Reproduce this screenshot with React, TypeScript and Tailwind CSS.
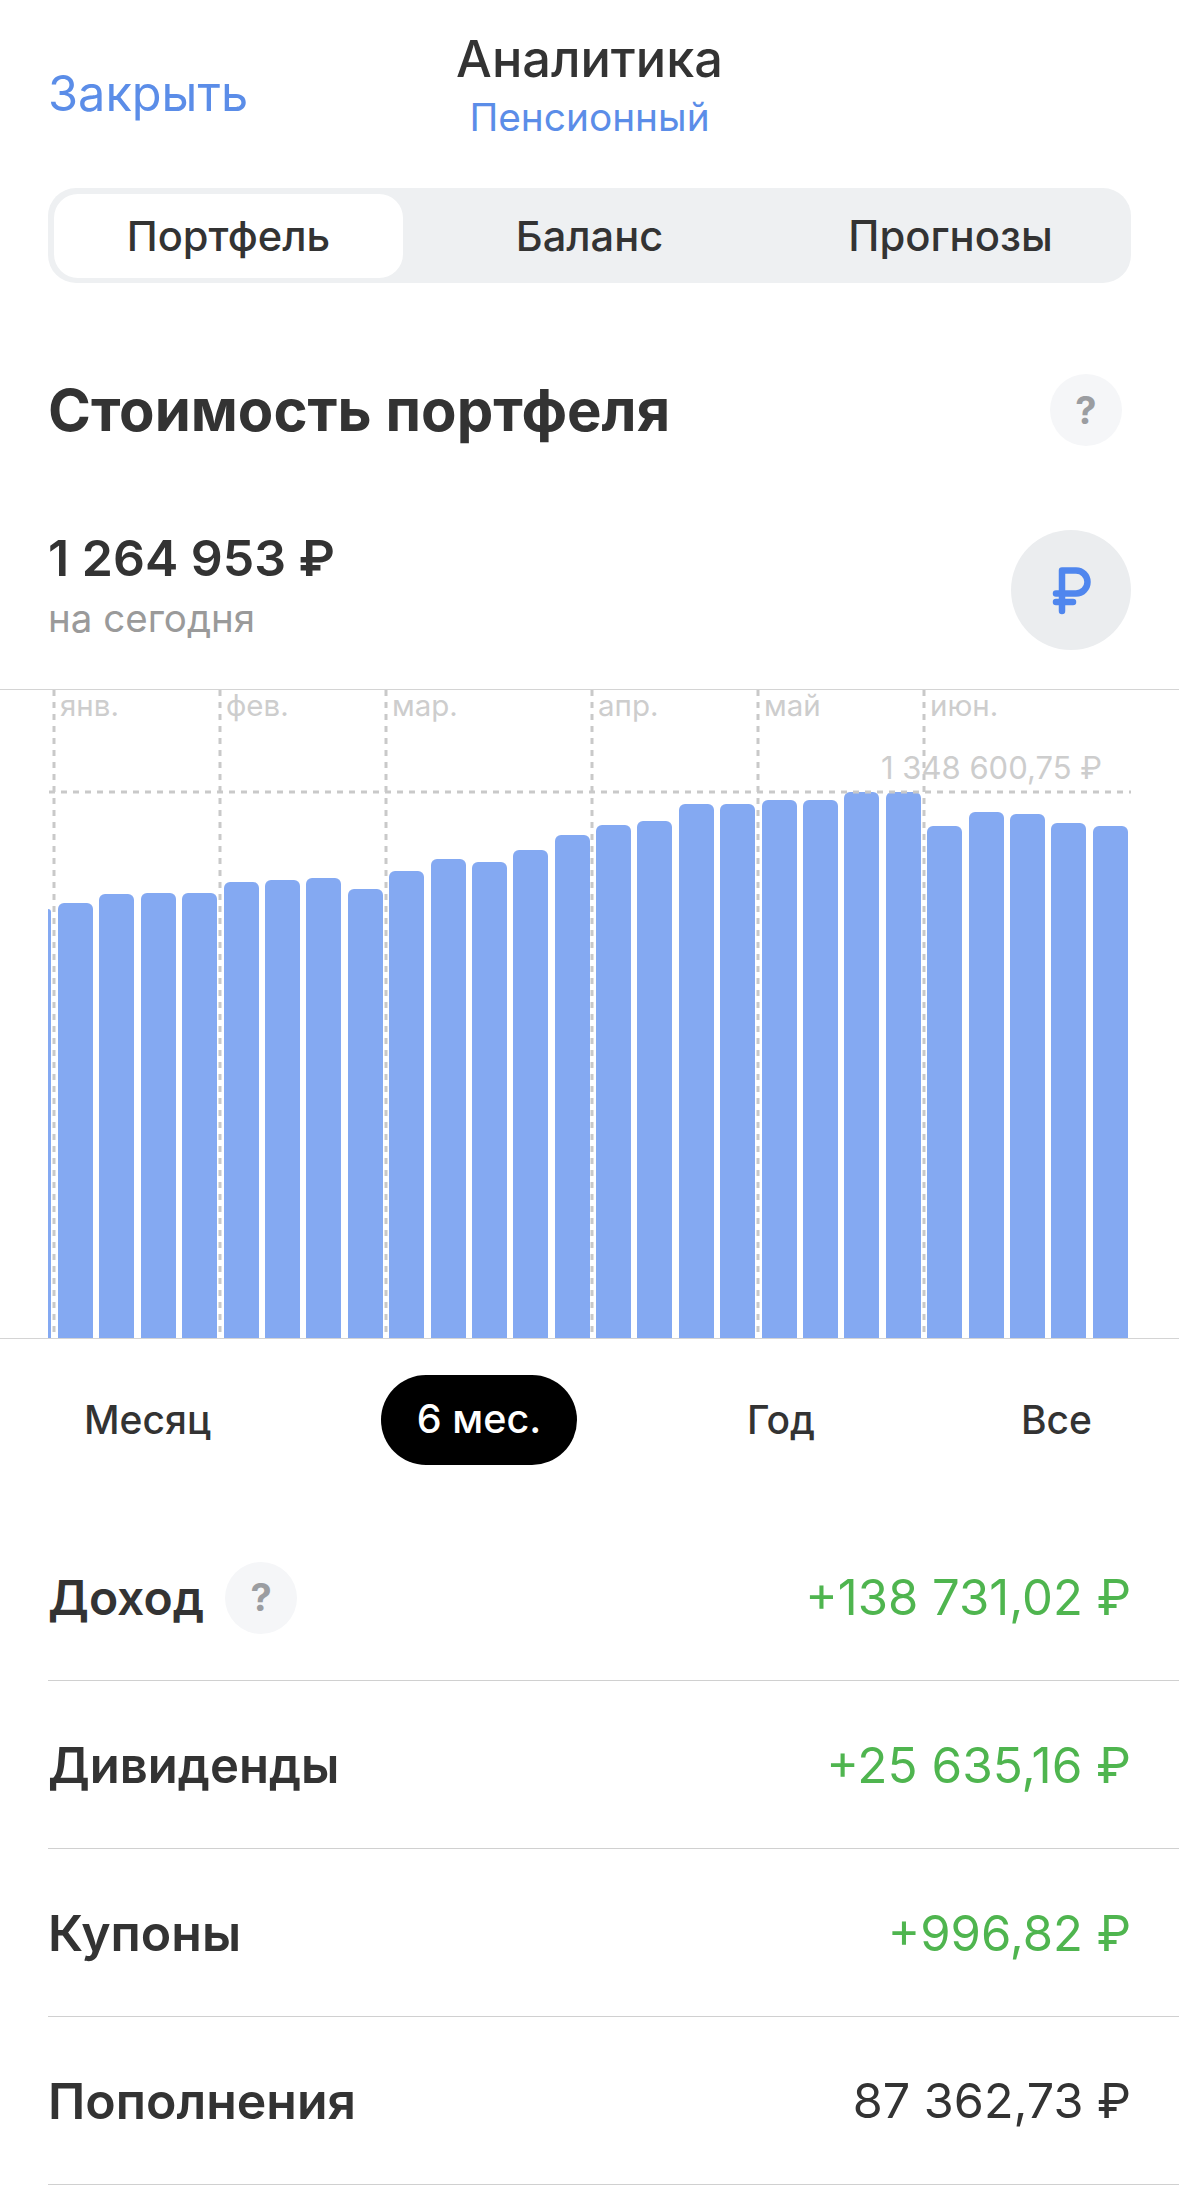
const barTops = [
  903, 894, 893, 893, 882, 880, 878, 889, 871, 859, 862, 850, 835, 825, 821, 804,
  804, 800, 800, 792, 792, 826, 812, 814, 823, 826,
];

const months = [
  { label: "янв.", x: 54 },
  { label: "фев.", x: 220 },
  { label: "мар.", x: 386 },
  { label: "апр.", x: 592 },
  { label: "май", x: 758 },
  { label: "июн.", x: 924 },
];

const rows = [
  { label: "Дивиденды", size: "text-[49px]", value: "+25 635,16 ₽", valueClass: "text-[49.5px] text-[#4fb54f]" },
  { label: "Купоны", size: "text-[50px]", value: "+996,82 ₽", valueClass: "text-[49px] text-[#4fb54f]" },
  { label: "Пополнения", size: "text-[50px]", value: "87 362,73 ₽", valueClass: "text-[48.5px] text-[#333333]" },
];

const CHART_BOTTOM = 1338;

function HelpDot() {
  return (
    <div className="flex h-[72px] w-[72px] shrink-0 items-center justify-center rounded-full bg-[#f5f6f8] text-[38px] font-bold text-[#9b9da1]">
      ?
    </div>
  );
}

function Chart() {
  return (
    <div className="relative mt-[39px] h-[650px] border-y border-[#d4d4d4]">
      <div className="flex h-full items-end pl-[48px]">
        <div className="mr-[7px] h-[429px] w-[3px] rounded-tr-[3px] bg-[#84a9f2]" />
        <div className="flex items-end gap-[6.4px]">
          {barTops.map((top, i) => (
            <div
              key={i}
              className="w-[35px] rounded-t-[6px] bg-[#84a9f2]"
              style={{ height: CHART_BOTTOM - top }}
            />
          ))}
        </div>
      </div>

      <svg
        className="absolute left-0 top-0 h-[648px] w-[1179px]"
        viewBox="0 0 1179 648"
        fill="none"
      >
        {months.map((m) => (
          <line
            key={m.x}
            x1={m.x}
            x2={m.x}
            y1="0"
            y2="648"
            stroke="#c9c9c9"
            strokeWidth="3"
            strokeDasharray="6 6"
          />
        ))}
        <line
          x1="49"
          x2="1131"
          y1="102"
          y2="102"
          stroke="#c9c9c9"
          strokeWidth="3"
          strokeDasharray="6 6"
        />
      </svg>

      {months.map((m) => (
        <span
          key={m.label}
          className="absolute top-[-3px] text-[29.5px] leading-[36px] text-[#cdcdcd]"
          style={{ left: m.x + 6 }}
        >
          {m.label}
        </span>
      ))}
      <span className="absolute left-[881px] top-[60px] text-[31px] leading-[36px] text-[#cdcdcd]">
        1 348 600,75 ₽
      </span>
    </div>
  );
}

export default function App() {
  return (
    <div className="h-[2189px] w-[1179px] overflow-hidden bg-white font-['Inter',sans-serif] text-[#333333]">
      <div className="grid h-[188px] grid-cols-[1fr_auto_1fr] items-center px-[48px]">
        <button className="justify-self-start text-[48.7px] text-[#5b8de8]">
          Закрыть
        </button>
        <div className="pb-[15px] text-center">
          <div className="text-[50.5px] font-medium leading-[60px]">Аналитика</div>
          <div className="text-[38.8px] leading-[56px] text-[#5b8de8]">Пенсионный</div>
        </div>
        <div />
      </div>

      <div className="mx-[48px] grid h-[95px] grid-cols-3 items-center gap-[12px] rounded-[28px] bg-[#eef0f2] px-[6px]">
        <div className="flex h-[84px] items-center justify-center rounded-[24px] bg-white pt-[1px] text-[41.6px] font-medium">
          Портфель
        </div>
        <div className="pt-[1px] text-center text-[41.6px] font-medium">Баланс</div>
        <div className="pt-[1px] text-center text-[41.8px] font-medium">Прогнозы</div>
      </div>

      <div className="mt-[91px] flex h-[72px] items-center justify-between pl-[48px] pr-[57px]">
        <h1 className="text-[58px] font-bold">Стоимость портфеля</h1>
        <HelpDot />
      </div>

      <div className="mt-[84px] flex h-[120px] items-center justify-between pl-[48px] pr-[48px]">
        <div className="pb-[4px]">
          <div className="text-[50px] font-semibold leading-[60px]">1 264 953 ₽</div>
          <div className="text-[38.5px] leading-[60px] text-[#9a9a9a]">на сегодня</div>
        </div>
        <div className="h-[120px] w-[120px] rounded-full bg-[#ebedef]">
          <svg viewBox="0 0 120 120" className="h-[120px] w-[120px]" fill="none">
            <path
              d="M51 81V40.5H65a11.5 11.5 0 0 1 0 23H45M45 72H62"
              stroke="#4f86ee"
              strokeWidth="6.5"
              strokeLinecap="round"
              strokeLinejoin="round"
            />
          </svg>
        </div>
      </div>

      <Chart />

      <div className="flex items-center justify-between pl-[48px] pr-[51px] pt-[36px]">
        <div className="px-[36px] text-[39px] font-medium">Месяц</div>
        <div className="flex h-[90px] items-center rounded-full bg-black px-[36px] text-[39.5px] font-medium text-white">
          6 мес.
        </div>
        <div className="px-[36px] text-[39px] font-medium">Год</div>
        <div className="px-[36px] text-[39px] font-medium">Все</div>
      </div>

      <div className="mt-[48px] pl-[48px]">
        <div className="flex h-[168px] items-center justify-between border-b border-[#d0d0d0] pr-[48px] pt-[2px]">
          <div className="flex items-center gap-[21px]">
            <span className="text-[48px] font-semibold">Доход</span>
            <HelpDot />
          </div>
          <span className="text-[49px] text-[#4fb54f]">+138 731,02 ₽</span>
        </div>
        {rows.map((row) => (
          <div
            key={row.label}
            className="flex h-[168px] items-center justify-between border-b border-[#d0d0d0] pr-[48px] pt-[2px]"
          >
            <span className={`${row.size} font-semibold`}>{row.label}</span>
            <span className={row.valueClass}>{row.value}</span>
          </div>
        ))}
      </div>
    </div>
  );
}
